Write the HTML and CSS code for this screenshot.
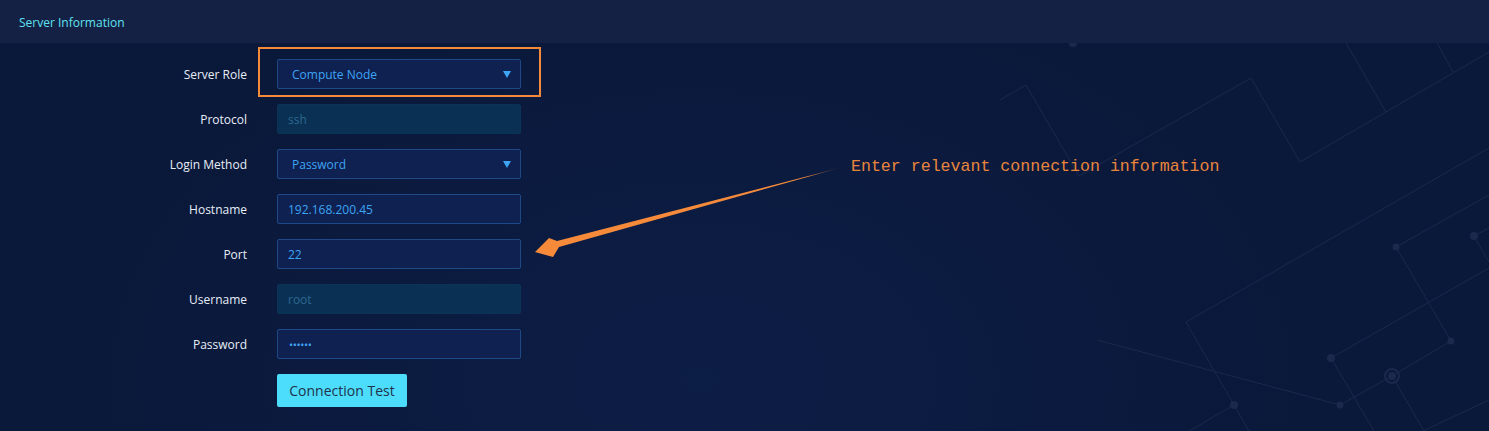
FILE: index.html
```html
<!DOCTYPE html>
<html lang="en">
<head>
<meta charset="utf-8">
<title>Server Information</title>
<link rel="stylesheet" href="styles.css">
</head>
<body>
<div class="page">
  <svg class="bg-lines" width="1489" height="431" viewBox="0 0 1489 431" aria-hidden="true">
    <g fill="none" stroke="#1b2a4c" stroke-width="1">
      <polyline points="1000,100 1026,85 1079,176 1251,78 1300,162 1489,52"/>
      <line x1="1346" y1="43" x2="1386" y2="112"/>
      <line x1="1437" y1="43" x2="1453" y2="72"/>
      <line x1="1186" y1="322" x2="1489" y2="148"/>
      <line x1="1186" y1="322" x2="1249" y2="431"/>
      <line x1="1097" y1="340" x2="1340" y2="405"/>
      <line x1="1234" y1="405" x2="1189" y2="431"/>
      <line x1="1331" y1="358" x2="1489" y2="268"/>
      <line x1="1331" y1="358" x2="1374" y2="431"/>
      <line x1="1396" y1="247" x2="1489" y2="195"/>
      <polyline points="1396,247 1451,341 1392,376 1340,405"/>
      <line x1="1392" y1="376" x2="1424" y2="431"/>
      <line x1="1474" y1="236" x2="1489" y2="228"/>
      <line x1="1474" y1="236" x2="1489" y2="262"/>
      <line x1="1489" y1="400" x2="1423" y2="431"/>
    </g>
    <g fill="#1b2a4c">
      <circle cx="1073" cy="43" r="4"/>
      <circle cx="1234" cy="405" r="4"/>
      <circle cx="1340" cy="405" r="3.5"/>
      <circle cx="1331" cy="358" r="4"/>
      <circle cx="1396" cy="247" r="3.5"/>
      <circle cx="1451" cy="341" r="3.5"/>
      <circle cx="1474" cy="236" r="4"/>
      <circle cx="1392" cy="376" r="4"/>
    </g>
    <circle cx="1392" cy="376" r="7" fill="none" stroke="#1b2a4c" stroke-width="2"/>
  </svg>

  <header class="panel-header">
    <span class="panel-title">Server Information</span>
  </header>

  <main class="form">
    <div class="row">
      <label class="label">Server Role</label>
      <div class="field highlight">
        <div class="control select">
          <span class="value">Compute Node</span>
          <span class="caret"></span>
        </div>
      </div>
    </div>
    <div class="row">
      <label class="label">Protocol</label>
      <div class="field">
        <div class="control disabled"><span class="value">ssh</span></div>
      </div>
    </div>
    <div class="row">
      <label class="label">Login Method</label>
      <div class="field">
        <div class="control select">
          <span class="value">Password</span>
          <span class="caret"></span>
        </div>
      </div>
    </div>
    <div class="row">
      <label class="label">Hostname</label>
      <div class="field">
        <div class="control"><span class="value">192.168.200.45</span></div>
      </div>
    </div>
    <div class="row">
      <label class="label">Port</label>
      <div class="field">
        <div class="control"><span class="value">22</span></div>
      </div>
    </div>
    <div class="row">
      <label class="label">Username</label>
      <div class="field">
        <div class="control disabled"><span class="value">root</span></div>
      </div>
    </div>
    <div class="row">
      <label class="label">Password</label>
      <div class="field">
        <div class="control"><span class="value dots">••••••</span></div>
      </div>
    </div>
    <div class="row">
      <span class="label"></span>
      <div class="field">
        <button class="btn" type="button">Connection Test</button>
      </div>
    </div>
  </main>

  <div class="annotation">
    <svg class="arrow" width="1489" height="431" viewBox="0 0 1489 431" aria-hidden="true">
      <defs>
        <linearGradient id="fade" x1="843" y1="167" x2="535" y2="252" gradientUnits="userSpaceOnUse">
          <stop offset="0" stop-color="#f58a3b" stop-opacity="0.1"/>
          <stop offset="0.12" stop-color="#f58a3b" stop-opacity="1"/>
          <stop offset="1" stop-color="#f58a3b"/>
        </linearGradient>
      </defs>
      <polygon fill="url(#fade)" points="843,167 557,241 549,238 535,252 553,257 559,247"/>
    </svg>
    <span class="note">Enter relevant connection information</span>
  </div>
</div>
</body>
</html>
```

FILE: styles.css
```css
* { box-sizing: border-box; }

html, body {
  margin: 0;
  padding: 0;
}

body {
  width: 1489px;
  height: 431px;
  overflow: hidden;
  background: #0b1a3d;
  font-family: "Open Sans", "Noto Sans", sans-serif;
}

.page {
  position: relative;
  width: 1489px;
  height: 431px;
  background:
    radial-gradient(ellipse 900px 600px at 700px 380px, rgba(16, 36, 86, 0.45), rgba(11, 26, 61, 0) 70%),
    #0a1839;
  overflow: hidden;
}

.bg-lines {
  position: absolute;
  left: 0;
  top: 0;
}

.panel-header {
  position: relative;
  height: 43px;
  background: #152144;
  display: flex;
  align-items: center;
  padding-left: 19px;
  padding-top: 2px;
}

.panel-title {
  color: #5fe3f2;
  font-size: 12px;
  line-height: 16px;
}

.form {
  position: relative;
  padding-top: 16px;
  display: flex;
  flex-direction: column;
  gap: 15px;
}

.row {
  display: grid;
  grid-template-columns: 247px 244px;
  column-gap: 30px;
  align-items: center;
}

.label {
  text-align: right;
  color: #e8eef8;
  font-size: 12px;
  line-height: 28px;
  padding-top: 2px;
}

.field {
  position: relative;
}

.highlight::after {
  content: "";
  position: absolute;
  left: -19px;
  right: -20px;
  top: -12px;
  bottom: -8px;
  border: 2px solid #f58a3b;
  pointer-events: none;
}

.control {
  height: 30px;
  border: 1px solid #1d4a87;
  border-radius: 2px;
  background: #0e2150;
  display: flex;
  align-items: center;
  padding: 2px 10px 0 10px;
}

.value {
  color: #3ea4f4;
  font-size: 12px;
  line-height: 16px;
}

.select .value {
  padding-left: 4px;
}

.dots {
  font-size: 11px;
  letter-spacing: -0.4px;
  padding-left: 1px;
}

.caret {
  margin-left: auto;
  margin-right: -1px;
  margin-top: -1px;
  width: 0;
  height: 0;
  border-left: 4px solid transparent;
  border-right: 4px solid transparent;
  border-top: 7px solid #3ea4f4;
}

.control.disabled {
  background: #0a3153;
  border-color: #0b3356;
}

.control.disabled .value {
  color: #2c6791;
}

.btn {
  width: 130px;
  height: 33px;
  border: none;
  border-radius: 2px;
  background: #4bddfb;
  color: #22314c;
  font-family: "Open Sans", "Noto Sans", sans-serif;
  font-size: 14px;
  padding: 0;
  cursor: pointer;
}

.annotation {
  position: absolute;
  left: 0;
  top: 0;
  width: 1489px;
  height: 431px;
  pointer-events: none;
}

.arrow {
  position: absolute;
  left: 0;
  top: 0;
}

.note {
  position: absolute;
  left: 851px;
  top: 157px;
  font-family: "Liberation Mono", "Courier New", monospace;
  font-size: 16.6px;
  line-height: 20px;
  color: #e8853c;
  white-space: nowrap;
}
```
